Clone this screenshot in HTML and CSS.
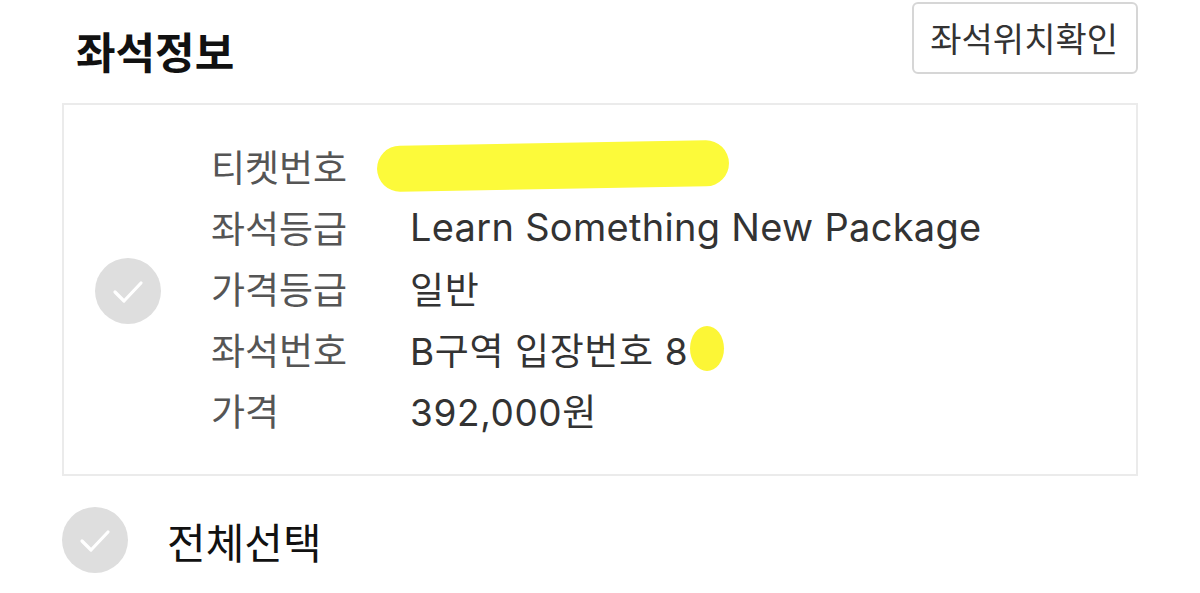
FILE: index.html
```html
<!DOCTYPE html>
<html>
<head>
    <title>좌석정보</title>
    <link rel="stylesheet" href="styles.css">
</head>
<body>
<header class="seat-header">
    <h1 class="seat-title">좌석정보</h1>
    <a href="#" class="map-button">좌석위치확인</a>
</header>
<section class="ticket-card">
    <div class="check-col">
        <span class="check-circle">
            <svg width="36" height="36" viewBox="0 0 36 36"><path d="M5 19 L14 28 L31 10" fill="none" stroke="#fff" stroke-width="3.2" stroke-linecap="round" stroke-linejoin="round"/></svg>
        </span>
    </div>
    <dl class="ticket-info">
        <div class="info-row">
            <dt>티켓번호</dt>
            <dd><span class="scribble"></span></dd>
        </div>
        <div class="info-row">
            <dt>좌석등급</dt>
            <dd class="latin">Learn Something New Package</dd>
        </div>
        <div class="info-row">
            <dt>가격등급</dt>
            <dd>일반</dd>
        </div>
        <div class="info-row">
            <dt>좌석번호</dt>
            <dd>B구역 입장번호 8<span class="blob"></span></dd>
        </div>
        <div class="info-row">
            <dt>가격</dt>
            <dd>392,000원</dd>
        </div>
    </dl>
</section>
<div class="select-all">
    <span class="check-circle">
        <svg width="36" height="36" viewBox="0 0 36 36"><path d="M5 19 L14 28 L31 10" fill="none" stroke="#fff" stroke-width="3.2" stroke-linecap="round" stroke-linejoin="round"/></svg>
    </span>
    <span class="select-label">전체선택</span>
</div>
</body>
</html>
```

FILE: styles.css
```css
body {
	margin: 0;
	padding: 2px 62px 0 62px;
	background-color: #FFFFFF;
	font-family: Inter, "Noto Sans CJK KR", sans-serif;
	color: #333333;
}

.seat-header {
	display: flex;
	justify-content: space-between;
	align-items: flex-start;
	height: 101px;
}

.seat-title {
	margin: 22px 0 0 14px;
	font-family: "Noto Sans CJK KR", sans-serif;
	font-size: 43px;
	font-weight: bold;
	line-height: 52px;
	color: #111111;
}

.map-button {
	display: block;
	box-sizing: border-box;
	height: 72px;
	padding: 0 18px 0 16px;
	border: 2px solid #d6d6d6;
	border-radius: 6px;
	font-family: "Noto Sans CJK KR", sans-serif;
	font-size: 34px;
	line-height: 68px;
	color: #333333;
	text-decoration: none;
}

.ticket-card {
	display: flex;
	align-items: center;
	box-sizing: border-box;
	height: 373px;
	border: 2px solid #ebebeb;
	padding: 30px 0 28px 0;
}

.check-col {
	width: 147px;
	padding-left: 31px;
	box-sizing: border-box;
}

.check-circle {
	display: flex;
	justify-content: center;
	align-items: center;
	width: 66px;
	height: 66px;
	border-radius: 50%;
	background-color: #dedede;
}

.ticket-info {
	margin: 0;
	flex: 1;
	align-self: flex-start;
}

.info-row {
	display: flex;
	align-items: center;
	height: 61px;
	font-size: 37px;
}

.info-row dt {
	width: 199px;
	font-family: "Noto Sans CJK KR", sans-serif;
	color: #555555;
}

.info-row dd {
	margin: 0;
	display: flex;
	align-items: center;
	letter-spacing: 0.6px;
	color: #333333;
}

.info-row dd.latin {
	font-size: 38px;
	letter-spacing: 0.3px;
}

.scribble {
	display: block;
	width: 352px;
	height: 46px;
	margin-left: -33px;
	border-radius: 23px;
	background-color: #fcfa3a;
	transform: rotate(-1deg);
}

.blob {
	display: inline-block;
	width: 34px;
	height: 45px;
	margin-left: 2px;
	border-radius: 50%;
	background-color: #fcf636;
}

.select-all {
	display: flex;
	align-items: center;
	margin-top: 31px;
}

.select-label {
	margin-left: 39px;
	font-family: "Noto Sans CJK KR", sans-serif;
	font-size: 42px;
	color: #111111;
}
```
